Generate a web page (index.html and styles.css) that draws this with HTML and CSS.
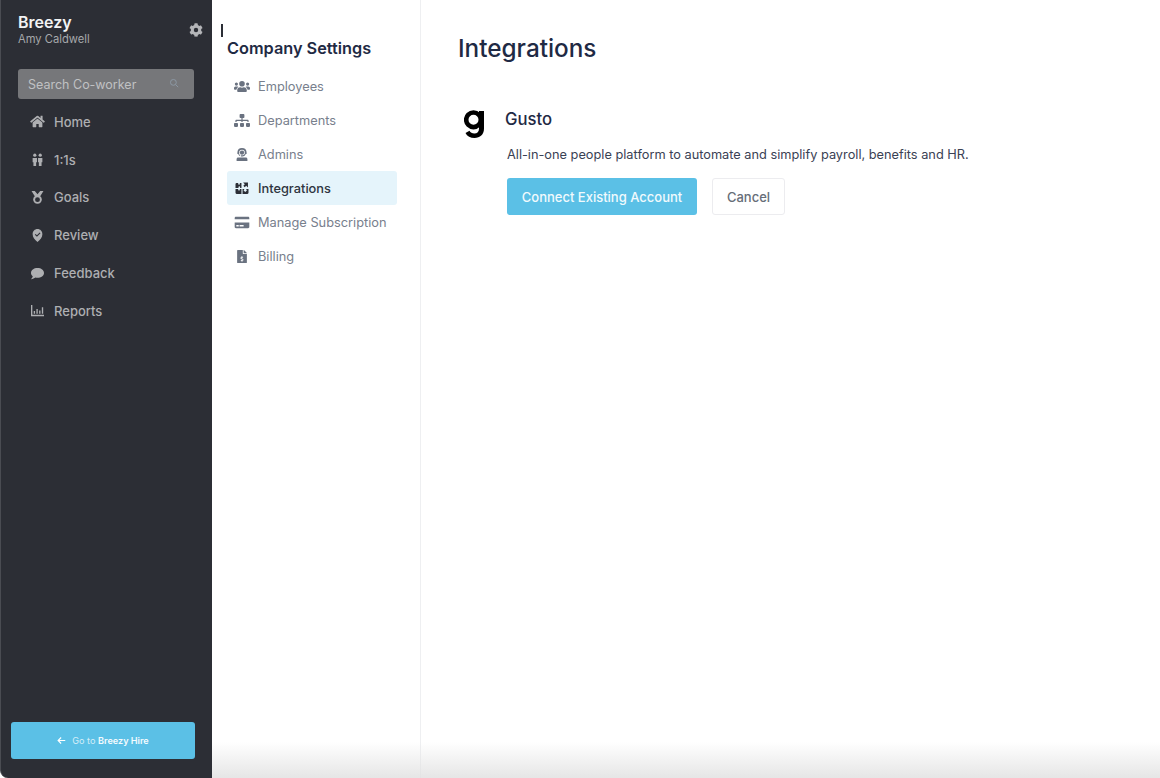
FILE: index.html
```html
<!DOCTYPE html>
<html lang="en">
<head>
<meta charset="utf-8">
<title>Integrations</title>
<link rel="stylesheet" href="styles.css">
</head>
<body>
<div class="app">
  <aside class="sidebar">
    <div class="brand">
      <div>
        <div class="brand-name">Breezy</div>
        <div class="brand-user">Amy Caldwell</div>
      </div>
      <svg class="gear" viewBox="0 0 512 512"><path d="M487 316l-42-25a190 190 0 0 0 0-70l42-25c5-3 7-8 6-14-11-35-30-67-54-93-4-4-10-5-15-2l-42 24a187 187 0 0 0-61-35V28c0-6-4-11-9-12-36-8-73-8-108 0-6 1-10 6-10 12v48a193 193 0 0 0-61 35L91 87c-5-3-11-2-15 2-24 26-43 58-54 93-2 6 1 11 6 14l42 25a190 190 0 0 0 0 70l-42 25c-5 3-7 8-6 14 11 35 30 67 54 93 4 4 10 5 15 2l42-24a187 187 0 0 0 61 35v48c0 6 4 11 10 12 36 8 73 8 108 0 5-1 9-6 9-12v-48a193 193 0 0 0 61-35l42 24c5 3 11 2 15-2 24-26 43-58 54-93 1-6-1-11-6-14zM256 336a80 80 0 1 1 0-160 80 80 0 0 1 0 160z"/></svg>
    </div>
    <div class="search">
      <span>Search Co-worker</span>
      <svg class="search-icon" viewBox="0 0 24 24"><circle cx="10.5" cy="10.5" r="7"/><path d="M16 16l6 6"/></svg>
    </div>
    <nav class="main-nav">
      <a class="main-link"><svg viewBox="0 0 576 512"><path d="M280 148L96 300v164c0 9 7 16 16 16l112-1c9 0 16-7 16-16v-95c0-9 7-16 16-16h64c9 0 16 7 16 16v95c0 9 7 16 16 16l112 1c9 0 16-7 16-16V300L296 148c-4-3-12-3-16 0zM572 251l-84-69V44c0-7-5-12-12-12h-56c-7 0-12 5-12 12v72l-89-74a48 48 0 0 0-61 0L4 251c-5 4-6 12-2 17l26 31c4 5 12 6 17 2L280 107c4-3 12-3 16 0l235 194c5 4 13 3 17-2l26-31c4-5 3-13-2-17z"/></svg>Home</a>
      <a class="main-link"><svg viewBox="0 0 24 24"><circle cx="7" cy="4" r="3"/><circle cx="17" cy="4" r="3"/><path d="M3 9h8v8H9.500v7h-5v-7H3zM13 9h8v8h-1.500v7h-5v-7H13z"/></svg>1:1s</a>
      <a class="main-link"><svg viewBox="0 0 24 24"><path fill-rule="evenodd" d="M1 0h6l5 6 5-6h6l-6 9.500a8 8 0 1 1-10 0zM12 11.500a4.500 4.500 0 1 0 0 9 4.500 4.500 0 0 0 0-9z"/></svg>Goals</a>
      <a class="main-link"><svg viewBox="0 0 24 24"><path fill-rule="evenodd" d="M12 0c5 0 9 4 9 9.500 0 5.500-4 10-9 14.500C7 19.500 3 15 3 9.500 3 4 7 0 12 0zM8.500 9L7 10.500l4 4 6.500-6.500L16 6.500l-5 5z"/></svg>Review</a>
      <a class="main-link"><svg viewBox="0 0 24 24"><path d="M12 2c6.600 0 12 3.900 12 9s-5.400 9-12 9c-1.400 0-2.700-.2-3.900-.5C6.500 21 3.500 22.500 0 22.500c1.500-1.500 3-3.500 3.200-5.500C1.200 15.400 0 13.300 0 11c0-5.100 5.400-9 12-9z"/></svg>Feedback</a>
      <a class="main-link"><svg viewBox="0 0 24 24"><path d="M0 2h2.500v18H24v2.500H0zM5 13h2.500v5H5zM10 9h2.500v9H10zM15 12h2.500v6H15zM20 6h2.500v12H20z"/></svg>Reports</a>
    </nav>
    <button class="hire-btn">
      <svg viewBox="0 0 24 24"><path d="M22 12H4M11 4l-8 8 8 8"/></svg>
      <span>Go to <b>Breezy Hire</b></span>
    </button>
  </aside>

  <section class="settings">
    <i class="caret"></i>
    <h2>Company Settings</h2>
    <nav class="settings-nav">
      <a class="set-link"><svg viewBox="0 0 640 512"><path d="M96 224a64 64 0 1 0 0-128 64 64 0 0 0 0 128zm448 0a64 64 0 1 0 0-128 64 64 0 0 0 0 128zm32 32h-64c-18 0-34 7-45 19 40 22 69 62 75 109h66c18 0 32-14 32-32v-32c0-35-29-64-64-64zM320 256a112 112 0 1 0 0-224 112 112 0 0 0 0 224zm77 32h-8c-21 10-44 16-69 16s-48-6-69-16h-8c-64 0-115 52-115 115v29c0 27 21 48 48 48h288c27 0 48-21 48-48v-29c0-63-52-115-115-115zm-224-13c-11-12-27-19-45-19H64c-35 0-64 29-64 64v32c0 18 14 32 32 32h66c6-47 35-87 75-109z"/></svg>Employees</a>
      <a class="set-link"><svg viewBox="0 0 640 512"><path d="M128 352H32c-18 0-32 14-32 32v96c0 18 14 32 32 32h96c18 0 32-14 32-32v-96c0-18-14-32-32-32zm-24-80h192v48h48v-48h192v48h48v-57c0-21-17-39-39-39H344v-64h40c18 0 32-14 32-32V32c0-18-14-32-32-32H256c-18 0-32 14-32 32v96c0 18 14 32 32 32h40v64H95c-22 0-39 17-39 39v57h48zm264 80h-96c-18 0-32 14-32 32v96c0 18 14 32 32 32h96c18 0 32-14 32-32v-96c0-18-14-32-32-32zm240 0h-96c-18 0-32 14-32 32v96c0 18 14 32 32 32h96c18 0 32-14 32-32v-96c0-18-14-32-32-32z"/></svg>Departments</a>
      <a class="set-link"><svg viewBox="0 0 24 24"><path d="M12 0a8.500 8.500 0 0 1 8.500 8v3H19a7.500 7.500 0 0 1-5.500 4.600H10v-2h3.200a5.500 5.500 0 0 0 4-3.600V8.500a5.200 5.200 0 0 0-10.400 0V11c.3 1 .9 1.800 1.700 2.500V15.300A7.500 7.500 0 0 1 5 11H3.500V8A8.500 8.500 0 0 1 12 0zM5 17.500h14c1.700 0 3 1.300 3 3V24H2v-3.500c0-1.700 1.300-3 3-3z"/><circle cx="12" cy="8.500" r="4"/></svg>Admins</a>
      <a class="set-link active"><svg viewBox="0 0 24 24"><path d="M0 4a2 2 0 0 1 2-2h3v1.500a1.500 1.500 0 0 0 3 0V2h3v9H8.500V9.500a1.500 1.500 0 0 0-3 0V11H0zM0 13h5v1.500a1.500 1.500 0 0 0 3 0V13h3v9H2a2 2 0 0 1-2-2zM13 13h3.500l-1.500 2.500 3 3 3-3-1.500-2.500H24v7a2 2 0 0 1-2 2h-9zM14 1h9v9l-3.200-3.200L17 9.500 14.500 7l2.700-2.800z"/></svg>Integrations</a>
      <a class="set-link"><svg viewBox="0 0 576 512"><path d="M0 432c0 26 22 48 48 48h480c26 0 48-22 48-48V256H0zm192-68c0-7 5-12 12-12h136c7 0 12 5 12 12v40c0 7-5 12-12 12H204c-7 0-12-5-12-12zm-128 0c0-7 5-12 12-12h72c7 0 12 5 12 12v40c0 7-5 12-12 12H76c-7 0-12-5-12-12zM576 80v48H0V80c0-26 22-48 48-48h480c26 0 48 22 48 48z"/></svg>Manage Subscription</a>
      <a class="set-link"><svg viewBox="0 0 384 512"><path fill-rule="evenodd" d="M377 105L279 7c-5-4-11-7-17-7h-6v128h128v-6c0-6-3-12-7-17zM224 136V0H24C11 0 0 11 0 24v464c0 13 11 24 24 24h336c13 0 24-11 24-24V160H248c-13 0-24-11-24-24zM208 430v24c0 4-4 8-8 8h-16c-4 0-8-4-8-8v-24c-11-1-22-5-31-11-4-3-4-8-1-11l12-11c3-3 7-3 10-1 3 2 7 3 11 3h28c7 0 12-6 12-13 0-6-4-11-9-13l-45-13c-18-6-31-24-31-44 0-24 19-44 42-45v-24c0-4 4-8 8-8h16c4 0 8 4 8 8v24c11 1 22 5 31 11 4 3 4 8 1 11l-12 11c-3 3-7 3-10 1-3-2-7-3-11-3h-28c-7 0-12 6-12 13 0 6 4 11 9 13l45 13c18 6 31 24 31 44 0 24-19 44-42 45z"/></svg>Billing</a>
    </nav>
  </section>

  <main class="content">
    <h1>Integrations</h1>
    <div class="integration">
      <svg class="gusto" viewBox="0 0 20 28"><circle class="gusto-ring" cx="9.500" cy="9.800" r="7.300"/><path d="M15 1h5v17.500c0 6-4 9.500-9.500 9.500-4 0-7.500-1.800-9-5l4-2.200c.9 1.700 2.600 2.700 4.800 2.700 3 0 4.700-1.800 4.700-5z"/></svg>
      <div class="integration-body">
        <h3>Gusto</h3>
        <p>All-in-one people platform to automate and simplify payroll, benefits and HR.</p>
        <div class="actions">
          <button class="btn-primary">Connect Existing Account</button>
          <button class="btn-cancel">Cancel</button>
        </div>
      </div>
    </div>
  </main>
  <div class="fade"></div>
</div>
</body>
</html>
```

FILE: styles.css
```css
* { box-sizing: border-box; }
html, body { margin: 0; height: 100%; }
body { font-family: Inter, "Liberation Sans", sans-serif; background: #fff; overflow: hidden; }
.app { position: relative; display: flex; width: 1160px; height: 778px; }

.sidebar {
  width: 212px; flex: none; display: flex; flex-direction: column;
  background: #2c2e35; border-left: 1px solid #4a4c52; border-bottom-left-radius: 8px;
  padding: 13px 17px 19px 10px;
}
.brand { display: flex; justify-content: space-between; align-items: center; padding: 0 0 0 7px; height: 33px; margin-right: -8px; }
.brand-name { color: #f2f3f4; font-size: 16px; font-weight: 600; line-height: 18px; margin-bottom: 1px; }
.brand-user { color: #a6a8ab; font-size: 11.200px; line-height: 15px; }
.gear { width: 14px; height: 14px; fill: #b4b5b8; }
.search {
  display: flex; align-items: center; justify-content: space-between;
  height: 30px; margin: 23px 0 0 7px; padding: 0 15px 0 10px; width: 176px;
  background: #76777a; border-radius: 3px; color: #c0c1c3; font-size: 12.500px;
}
.search-icon { width: 10px; height: 10px; fill: none; stroke: #8d9aa6; stroke-width: 2.200; margin-bottom: 3px; }
.main-nav { display: flex; flex-direction: column; margin-top: 4px; }
.main-link { display: flex; align-items: center; height: 37.800px; padding-left: 19px; color: #aeafb2; font-size: 13px; font-weight: 500; }
.main-link svg { width: 15px; height: 13px; margin-right: 9px; fill: #aeafb2; flex: none; }
.hire-btn {
  margin-top: auto; display: flex; align-items: center; justify-content: center; gap: 6px;
  width: 184px; height: 37px; border: 0; border-radius: 3px; background: #5bc0e6;
  color: #d5eef8; font: 400 9.100px Inter, "Liberation Sans", sans-serif; padding: 0;
}
.hire-btn b { color: #f4fbfe; font-weight: 600; }
.hire-btn svg { width: 9px; height: 9px; fill: none; stroke: #fff; stroke-width: 3; }

.settings { position: relative; width: 209px; flex: none; border-right: 1px solid #eeeff1; padding: 38px 0 0 15px; }
.caret { position: absolute; left: 9px; top: 24px; width: 1.500px; height: 13px; background: #2b2e36; }
.settings h2 { margin: 0; color: #1f2a44; font-size: 16.300px; font-weight: 600; line-height: 20px; }
.settings-nav { display: flex; flex-direction: column; margin-top: 11px; width: 170px; }
.set-link { display: flex; align-items: center; height: 34.100px; padding-left: 7px; border-radius: 3px; color: #78808d; font-size: 12.800px; }
.set-link svg { width: 16px; height: 13px; margin-right: 8px; fill: #6a7280; flex: none; }
.set-link.active { background: #e5f4fb; color: #2e3440; font-weight: 500; }
.set-link.active svg { fill: #2b2e36; }

.content { flex: 1; padding: 33px 0 0 37px; }
.content h1 { margin: 0; color: #1f2a44; font-size: 24.300px; font-weight: 500; line-height: 30px; }
.integration { display: flex; margin-top: 46px; }
.gusto { width: 20px; height: 28px; fill: #000; margin: 1px 0 0 6px; flex: none; }
.gusto-ring { fill: none; stroke: #000; stroke-width: 4.600; }
.integration-body { margin-left: 23px; }
.integration-body h3 { margin: 0 0 0 -2px; color: #1f2a44; font-size: 16.700px; font-weight: 500; line-height: 20px; }
.integration-body p { margin: 17px 0 0; color: #3a4154; font-size: 12.780px; line-height: 18px; }
.actions { display: flex; gap: 15px; margin-top: 14px; }
.btn-primary, .btn-cancel { height: 37px; border-radius: 3px; font: 500 13px Inter, "Liberation Sans", sans-serif; padding: 0; }
.btn-primary { width: 190px; border: 0; background: #5bc0e6; color: #f1fafd; }
.btn-cancel { width: 73px; border: 1px solid #ececef; background: #fff; color: #666d78; }

.fade { position: absolute; left: 212px; right: 0; bottom: 0; height: 36px; background: linear-gradient(rgba(225,225,225,0), rgba(225,225,225,.85)); pointer-events: none; }
```
